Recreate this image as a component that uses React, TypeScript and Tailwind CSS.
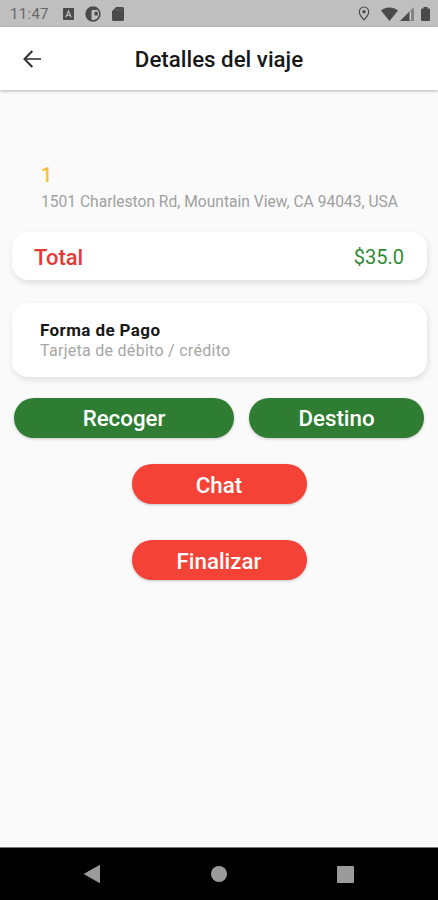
import React from 'react';

interface PillButtonProps {
  label: string;
  className: string;
}

const PillButton: React.FC<PillButtonProps> = ({ label, className }) => (
  <button
    className={`h-10 rounded-full text-white text-[22.3px] leading-[38px] font-medium shadow-[0_1px_3px_rgba(0,0,0,0.22)] ${className}`}
  >
    {label}
  </button>
);

const StatusBar: React.FC = () => (
  <div className="h-[27px] bg-[#bfbfbf] flex items-center text-[#4a4a4a]">
    <span className="ml-[10px] w-[53px] text-[15px] leading-[27px] text-[#686868] tracking-[0.3px] pt-[2px]">11:47</span>
    <svg width="12" height="12" viewBox="0 0 12 12" className="mt-px">
      <rect width="11" height="12" rx="1" fill="currentColor" />
      <path fill="none" stroke="#b4b4b4" strokeWidth="1.300" d="M2.800 9.300 5.500 3l2.700 6.300M3.700 7.400h3.600" />
    </svg>
    <svg width="16" height="16" viewBox="0 0 16 16" className="ml-[10px] mt-px">
      <circle cx="8" cy="8" r="6.900" fill="none" stroke="currentColor" strokeWidth="1.500" />
      <path fill="currentColor" d="M7 1A7 7 0 0 0 1 8a7 7 0 0 0 5.500 6.800V5.500c0-1 .6-1.500 1.700-1.500h4L11 2ZM9.500 5.800h3.300v3.700H9.500Z" />
    </svg>
    <svg width="12" height="14" viewBox="0 0 12 14" className="ml-[11px] mt-px">
      <path fill="currentColor" d="M4.200 0h6.300A1.500 1.500 0 0 1 12 1.500v11a1.500 1.500 0 0 1-1.500 1.500h-9A1.500 1.500 0 0 1 0 12.500V4.200Z" />
      <path stroke="#666666" d="M4.500 2v2M6.800 2v2M9.100 2v2" />
    </svg>

    <svg width="12" height="15" viewBox="0 0 12 15" className="ml-auto">
      <path fill="none" stroke="currentColor" strokeWidth="1.200" d="M6 1a4.700 4.700 0 0 0-4.700 4.700C1.300 9 6 13.800 6 13.800S10.700 9 10.700 5.700A4.700 4.700 0 0 0 6 1Z" />
      <circle cx="6" cy="5.700" r="1.700" fill="currentColor" />
    </svg>
    <svg width="17" height="14" viewBox="0 0 17 14" className="ml-[11px]">
      <path fill="currentColor" d="M0 3.500C4.600-.5 12.400-.5 17 3.500L8.500 14Z" />
    </svg>
    <svg width="14" height="14" viewBox="0 0 14 14" className="ml-[2px] mt-px">
      <path fill="currentColor" d="M9 5v9H0Z" />
      <path fill="#858585" d="M14 0v14H9V5Z" />
      <path stroke="#d0d0d0" d="M10.500 5v8" />
    </svg>
    <svg width="9" height="14" viewBox="0 0 9 14" className="ml-[7px] mr-[8px]">
      <path fill="currentColor" d="M2.500 0h4v1.500H8a1 1 0 0 1 1 1V13a1 1 0 0 1-1 1H1a1 1 0 0 1-1-1V2.500a1 1 0 0 1 1-1h1.500Z" />
    </svg>
  </div>
);

const App: React.FC = () => {
  return (
    <div className="h-screen w-full flex flex-col overflow-hidden bg-[#fafafa] font-['Roboto',sans-serif]">
      <StatusBar />

      <header className="h-[63px] shrink-0 bg-white grid grid-cols-[64px_1fr_64px] items-center shadow-[0_1px_3px_rgba(0,0,0,0.3)]">
        <button className="pl-[23px] text-[#303030]" aria-label="Volver">
          <svg width="18" height="18" viewBox="0 0 18 18" fill="none" strokeWidth="2">
            <path stroke="#5c5c5c" d="M2 9h16" />
            <path stroke="currentColor" d="M9.300 1 1.500 9l7.800 8" />
          </svg>
        </button>
        <h1 className="text-center text-[22.3px] leading-[26px] font-medium text-[#181818] whitespace-nowrap">
          Detalles del viaje
        </h1>
      </header>

      <main className="flex-1 flex flex-col pt-[73px]">
        <div className="pl-[41px]">
          <p className="text-[20px] leading-6 font-medium text-[#fbc02d]">1</p>
          <p className="mt-[5px] text-[15.6px] leading-5 text-[#a0a0a0] whitespace-nowrap">
            1501 Charleston Rd, Mountain View, CA 94043, USA
          </p>
        </div>

        <div className="mt-5 ml-3 mr-[11px] h-12 shrink-0 rounded-[16px] bg-white pl-[22px] pr-[23px] pt-[2px] flex items-center justify-between shadow-[1px_3px_6px_rgba(0,0,0,0.11)]">
          <span className="text-[22px] font-medium text-[#e53935]">Total</span>
          <span className="text-[20px] text-[#2e8b33]">$35.0</span>
        </div>

        <div className="mt-[23px] ml-3 mr-[11px] h-[74px] shrink-0 rounded-[16px] bg-white pl-7 pt-[17px] shadow-[1px_3px_6px_rgba(0,0,0,0.11)]">
          <p className="text-[17px] leading-5 font-bold tracking-[0.4px] text-[#181818]">Forma de Pago</p>
          <p className="mt-px text-[16px] leading-5 tracking-[0.28px] text-[#a6a6a6]">Tarjeta de débito / crédito</p>
        </div>

        <div className="mt-[21px] flex pl-[14px] gap-[15px]">
          <PillButton label="Recoger" className="w-[220px] bg-[#2e7d32]" />
          <PillButton label="Destino" className="w-[175px] bg-[#2e7d32]" />
        </div>

        <div className="mt-[26px] flex flex-col items-center gap-9">
          <PillButton label="Chat" className="w-[175px] pt-[2px] bg-[#f44336]" />
          <PillButton label="Finalizar" className="w-[175px] pt-[2px] bg-[#f44336]" />
        </div>
      </main>

      <nav className="h-[53px] shrink-0 bg-black border-t border-[#777777] flex items-center text-[#9b9b9b]">
        <svg width="16" height="18" viewBox="0 0 16 18" className="ml-[84px]">
          <path fill="currentColor" stroke="currentColor" strokeLinejoin="round" d="M15.500.5v17L.5 9Z" />
        </svg>
        <div className="ml-[111px] size-4 rounded-full bg-[#9b9b9b]" />
        <div className="ml-[110px] size-[17px] rounded-[1px] bg-[#9b9b9b]" />
      </nav>
    </div>
  );
};

export default App;
